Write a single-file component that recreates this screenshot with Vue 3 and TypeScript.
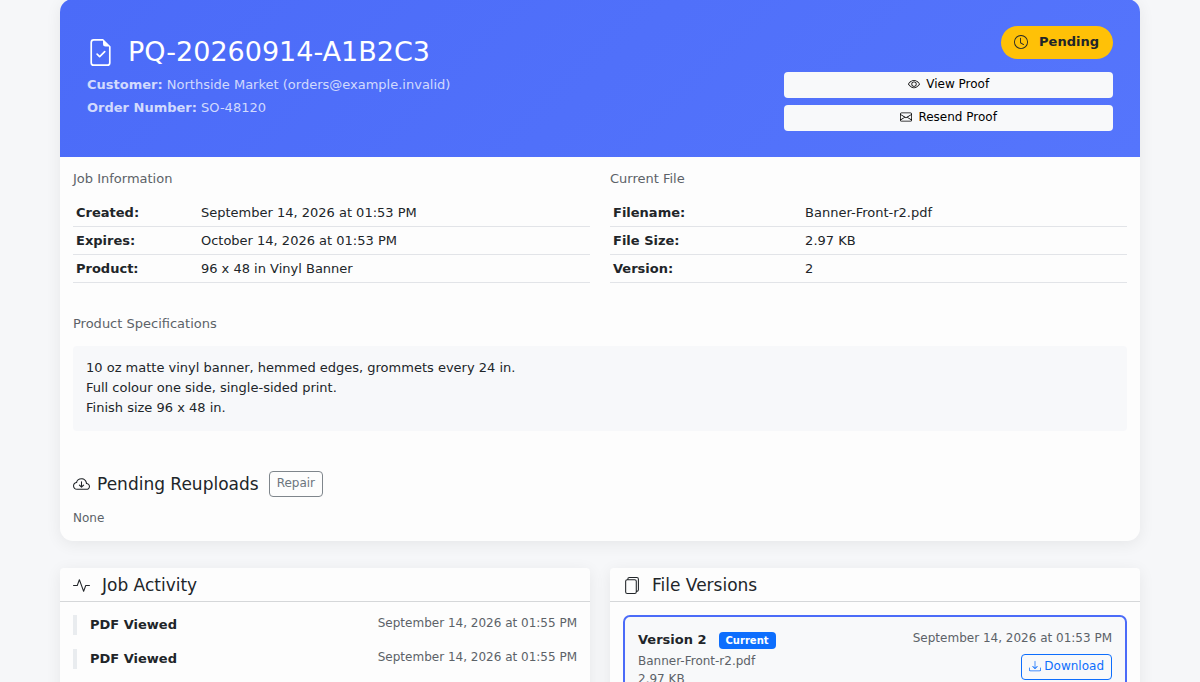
<script setup lang="ts">
interface Field {
  label: string
  value: string
}

const jobInfo: Field[] = [
  { label: 'Created:', value: 'September 14, 2026 at 01:53 PM' },
  { label: 'Expires:', value: 'October 14, 2026 at 01:53 PM' },
  { label: 'Product:', value: '96 x 48 in Vinyl Banner' },
]

const fileInfo: Field[] = [
  { label: 'Filename:', value: 'Banner-Front-r2.pdf' },
  { label: 'File Size:', value: '2.97 KB' },
  { label: 'Version:', value: '2' },
]

const specs: string[] = [
  '10 oz matte vinyl banner, hemmed edges, grommets every 24 in.',
  'Full colour one side, single-sided print.',
  'Finish size 96 x 48 in.',
]

const activity = [
  { id: 1, title: 'PDF Viewed', time: 'September 14, 2026 at 01:55 PM' },
  { id: 2, title: 'PDF Viewed', time: 'September 14, 2026 at 01:55 PM' },
]
</script>

<template>
  <main class="page">
    <section class="card job">
      <header class="hero">
        <div class="hero-main">
          <h1 class="hero-title">
            <svg class="icon icon-xl" viewBox="0 0 16 16" aria-hidden="true">
              <path d="M10.854 7.854a.5.5 0 0 0-.708-.708L7.5 9.793 6.354 8.646a.5.5 0 1 0-.708.708l1.5 1.5a.5.5 0 0 0 .708 0z" />
              <path d="M14 14V4.5L9.500 0H4a2 2 0 0 0-2 2v12a2 2 0 0 0 2 2h8a2 2 0 0 0 2-2M9.500 3A1.500 1.500 0 0 0 11 4.500h2V14a1 1 0 0 1-1 1H4a1 1 0 0 1-1-1V2a1 1 0 0 1 1-1h5.500z" />
            </svg>
            <span>PQ-20260914-A1B2C3</span>
          </h1>
          <p class="hero-line"><strong>Customer:</strong> Northside Market (orders@example.invalid)</p>
          <p class="hero-line"><strong>Order Number:</strong> SO-48120</p>
        </div>
        <div class="hero-side">
          <span class="status">
            <svg class="icon icon-md" viewBox="0 0 16 16" aria-hidden="true">
              <path d="M8 3.5a.5.5 0 0 0-1 0V9a.5.5 0 0 0 .252.434l3.500 2a.5.5 0 0 0 .496-.868L8 8.710z" />
              <path d="M8 16A8 8 0 1 0 8 0a8 8 0 0 0 0 16m7-8A7 7 0 1 1 1 8a7 7 0 0 1 14 0" />
            </svg>
            Pending
          </span>
          <div class="hero-actions">
            <button type="button" class="btn btn-light">
              <svg class="icon icon-sm" viewBox="0 0 16 16" aria-hidden="true">
                <path d="M16 8s-3-5.500-8-5.500S0 8 0 8s3 5.500 8 5.500S16 8 16 8M1.173 8a13 13 0 0 1 1.660-2.043C4.120 4.668 5.880 3.500 8 3.500s3.879 1.168 5.168 2.457A13 13 0 0 1 14.828 8q-.086.130-.195.288c-.335.480-.830 1.120-1.465 1.755C11.879 11.332 10.119 12.500 8 12.500s-3.879-1.168-5.168-2.457A13 13 0 0 1 1.172 8z" />
                <path d="M8 5.500a2.500 2.500 0 1 0 0 5 2.500 2.500 0 0 0 0-5M4.500 8a3.500 3.500 0 1 1 7 0 3.500 3.500 0 0 1-7 0" />
              </svg>
              View Proof
            </button>
            <button type="button" class="btn btn-light">
              <svg class="icon icon-sm" viewBox="0 0 16 16" aria-hidden="true">
                <path d="M0 4a2 2 0 0 1 2-2h12a2 2 0 0 1 2 2v8a2 2 0 0 1-2 2H2a2 2 0 0 1-2-2zm2-1a1 1 0 0 0-1 1v.217l7 4.200 7-4.200V4a1 1 0 0 0-1-1zm13 2.383-4.708 2.825L15 11.105zm-.034 6.876-5.640-3.471L8 9.583l-1.326-.795-5.640 3.470A1 1 0 0 0 2 13h12a1 1 0 0 0 .966-.741M1 11.105l4.708-2.897L1 5.383z" />
              </svg>
              Resend Proof
            </button>
          </div>
        </div>
      </header>

      <div class="job-body">
        <div class="columns">
          <section>
            <h2 class="label">Job Information</h2>
            <table class="fields fields-job">
              <tbody>
                <tr v-for="row in jobInfo" :key="row.label">
                  <th scope="row">{{ row.label }}</th>
                  <td>{{ row.value }}</td>
                </tr>
              </tbody>
            </table>
          </section>
          <section>
            <h2 class="label">Current File</h2>
            <table class="fields fields-file">
              <tbody>
                <tr v-for="row in fileInfo" :key="row.label">
                  <th scope="row">{{ row.label }}</th>
                  <td>{{ row.value }}</td>
                </tr>
              </tbody>
            </table>
          </section>
        </div>

        <section class="specs">
          <h2 class="label">Product Specifications</h2>
          <div class="specs-box">
            <p v-for="line in specs" :key="line">{{ line }}</p>
          </div>
        </section>

        <section class="reuploads">
          <div class="reuploads-head">
            <h2 class="heading">
              <svg class="icon icon-lg" viewBox="0 0 16 16" aria-hidden="true">
                <path d="M7.646 10.854a.5.5 0 0 0 .708 0l2-2a.5.5 0 0 0-.708-.708L8.500 9.293V5.500a.5.5 0 0 0-1 0v3.793L6.354 8.146a.5.5 0 1 0-.708.708z" />
                <path d="M4.406 3.342A5.530 5.530 0 0 1 8 2c2.690 0 4.923 2 5.166 4.579C14.758 6.804 16 8.137 16 9.773 16 11.569 14.502 13 12.687 13H3.781C1.708 13 0 11.366 0 9.318c0-1.763 1.266-3.223 2.942-3.593.143-.863.698-1.723 1.464-2.383m.653.757c-.757.653-1.153 1.440-1.153 2.056v.448l-.445.049C2.064 6.805 1 7.952 1 9.318 1 10.785 2.230 12 3.781 12h8.906C13.980 12 15 10.988 15 9.773c0-1.216-1.020-2.228-2.313-2.228h-.5v-.5C12.188 4.825 10.328 3 8 3a4.530 4.530 0 0 0-2.941 1.100z" />
              </svg>
              Pending Reuploads
            </h2>
            <button type="button" class="btn btn-outline">Repair</button>
          </div>
          <p class="muted">None</p>
        </section>
      </div>
    </section>

    <div class="columns">
      <section class="card panel">
        <header class="panel-head">
          <svg class="icon icon-lg" viewBox="0 0 16 16" aria-hidden="true">
            <path d="M6 2a.5.5 0 0 1 .470.330L10 12.036l1.530-4.208A.5.5 0 0 1 12 7.500h3.500a.5.5 0 0 1 0 1h-3.150l-1.880 5.170a.5.5 0 0 1-.940 0L6 3.964 4.470 8.171A.5.5 0 0 1 4 8.500H.5a.5.5 0 0 1 0-1h3.150l1.880-5.170A.5.5 0 0 1 6 2" />
          </svg>
          <h2 class="heading">Job Activity</h2>
        </header>
        <ul class="activity">
          <li v-for="item in activity" :key="item.id">
            <strong>{{ item.title }}</strong>
            <time class="muted date">{{ item.time }}</time>
          </li>
        </ul>
      </section>

      <section class="card panel">
        <header class="panel-head">
          <svg class="icon icon-lg" viewBox="0 0 16 16" aria-hidden="true">
            <path d="M13 0H6a2 2 0 0 0-2 2 2 2 0 0 0-2 2v10a2 2 0 0 0 2 2h7a2 2 0 0 0 2-2 2 2 0 0 0 2-2V2a2 2 0 0 0-2-2m0 13V4a2 2 0 0 0-2-2H5a1 1 0 0 1 1-1h7a1 1 0 0 1 1 1v10a1 1 0 0 1-1 1M3 4a1 1 0 0 1 1-1h7a1 1 0 0 1 1 1v10a1 1 0 0 1-1 1H4a1 1 0 0 1-1-1z" />
          </svg>
          <h2 class="heading">File Versions</h2>
        </header>
        <div class="versions">
          <article class="version">
            <div class="version-info">
              <h3 class="version-title">Version 2 <span class="badge">Current</span></h3>
              <p class="muted">Banner-Front-r2.pdf</p>
              <p class="muted">2.97 KB</p>
            </div>
            <div class="version-side">
              <time class="muted date">September 14, 2026 at 01:53 PM</time>
              <a href="#" class="btn btn-primary">
                <svg class="icon icon-sm" viewBox="0 0 16 16" aria-hidden="true">
                  <path d="M.5 9.900a.5.5 0 0 1 .5.5v2.500a1 1 0 0 0 1 1h12a1 1 0 0 0 1-1v-2.500a.5.5 0 0 1 1 0v2.500a2 2 0 0 1-2 2H2a2 2 0 0 1-2-2v-2.500a.5.5 0 0 1 .5-.5" />
                  <path d="M7.646 11.854a.5.5 0 0 0 .708 0l3-3a.5.5 0 0 0-.708-.708L8.500 10.293V1.500a.5.5 0 0 0-1 0v8.793L5.354 8.146a.5.5 0 1 0-.708.708z" />
                </svg>
                Download
              </a>
            </div>
          </article>
        </div>
      </section>
    </div>
  </main>
</template>

<style>
html {
  background: #f6f7f9;
  scrollbar-width: none;
}

body {
  margin: 0;
}
</style>

<style scoped>
.page {
  box-sizing: border-box;
  width: 90%;
  margin: -1px auto 0;
  color: #212529;
  font-family: "DejaVu Sans", "Liberation Sans", sans-serif;
  font-size: 13px;
  line-height: 20px;
}

h1,
h2,
h3,
p,
ul {
  margin: 0;
  padding: 0;
  font-weight: 400;
}

.icon {
  display: block;
  flex: none;
  fill: currentColor;
}

.icon-sm {
  width: 12px;
  height: 12px;
}

.icon-md {
  width: 14px;
  height: 14px;
}

.icon-lg {
  width: 17px;
  height: 17px;
}

.icon-xl {
  width: 27px;
  height: 27px;
}

.card {
  background: #fdfdfd;
  box-shadow: 0 3px 16px rgba(0, 0, 0, 0.07);
}

.job {
  margin-bottom: 27px;
  border-radius: 13px;
  overflow: hidden;
}

.hero {
  display: flex;
  align-items: center;
  padding: 27px 17px 26px;
  background: linear-gradient(135deg, #4b6bf8, #5575fc);
  color: #fff;
}

.hero-main {
  box-sizing: border-box;
  flex: 1;
  padding: 0 10px 3px;
}

.hero-side {
  box-sizing: border-box;
  flex: 0 0 33.333%;
  display: flex;
  flex-direction: column;
  align-items: flex-end;
  gap: 13px;
  padding: 0 10px;
}

.hero-title {
  display: flex;
  align-items: center;
  gap: 14px;
  margin-bottom: 7px;
  font-size: 27px;
  line-height: 32px;
}

.hero-line {
  color: rgba(255, 255, 255, 0.75);
}

.hero-line + .hero-line {
  margin-top: 3px;
}

.status {
  display: flex;
  align-items: center;
  gap: 11px;
  box-sizing: border-box;
  height: 33px;
  padding: 0 14px 2px 13px;
  border-radius: 17px;
  background: #ffc107;
  color: #212529;
  font-weight: 700;
}

.hero-actions {
  display: flex;
  flex-direction: column;
  gap: 7px;
  width: 100%;
}

.btn {
  display: flex;
  align-items: center;
  justify-content: center;
  gap: 6px;
  box-sizing: border-box;
  height: 26px;
  margin: 0;
  padding: 0 7px 2px;
  border: 1px solid transparent;
  border-radius: 4px;
  background: transparent;
  font-family: inherit;
  font-size: 12px;
  line-height: 18px;
  text-decoration: none;
  cursor: pointer;
}

.btn-light {
  background: #f8f9fa;
  color: #000;
}

.btn-outline {
  border-color: #7f868c;
  color: #6c757d;
}

.btn-primary {
  gap: 3px;
  border-color: #0d6efd;
  color: #0d6efd;
}

.job-body {
  padding: 12px 13px 14px;
}

.columns {
  display: grid;
  grid-template-columns: 1fr 1fr;
  gap: 20px;
}

.label {
  color: #5c6268;
  font-size: 13px;
  line-height: 20px;
}

.fields {
  width: 100%;
  margin-top: 10px;
  border-collapse: collapse;
  table-layout: fixed;
}

.fields th,
.fields td {
  height: 21px;
  padding: 3px;
  border-bottom: 1px solid #e2e4e8;
  text-align: left;
  line-height: 21px;
}

.fields-job th {
  width: 23%;
}

.fields-file th {
  width: 36%;
}

.specs {
  margin-top: 31px;
}

.specs-box {
  margin-top: 12px;
  padding: 12px 13px 13px;
  border-radius: 4px;
  background: #f7f8fa;
}

.reuploads {
  margin-top: 40px;
}

.reuploads-head {
  display: flex;
  align-items: center;
  gap: 10px;
  margin-bottom: 12px;
}

.heading {
  display: flex;
  align-items: center;
  gap: 7px;
  font-size: 17px;
  line-height: 20px;
}

.muted {
  color: #5c6268;
  font-size: 12px;
  line-height: 18px;
}

.date {
  line-height: 16px;
}

.panel {
  border-radius: 4px;
}

.panel-head {
  display: flex;
  align-items: center;
  gap: 12px;
  padding: 7px 13px 6px;
  border-bottom: 1px solid #d5d7d9;
}

.activity {
  display: flex;
  flex-direction: column;
  gap: 14px;
  padding: 13px;
  list-style: none;
}

.activity li {
  display: flex;
  justify-content: space-between;
  padding-left: 13px;
  border-left: 4px solid #e9ecef;
}

.versions {
  padding: 13px;
}

.version {
  display: flex;
  justify-content: space-between;
  padding: 13px;
  border: 2px solid #4b6bf8;
  border-radius: 7px;
  background: #f8f9fa;
}

.version-title {
  display: flex;
  align-items: center;
  gap: 12px;
  margin-bottom: 2px;
  font-size: 13px;
  font-weight: 700;
  line-height: 20px;
}

.badge {
  padding: 0 7px;
  border-radius: 4px;
  background: #0d6efd;
  color: #fff;
  font-size: 10px;
  line-height: 17px;
}

.version-side {
  display: flex;
  flex-direction: column;
  align-items: flex-end;
  gap: 8px;
}
</style>
